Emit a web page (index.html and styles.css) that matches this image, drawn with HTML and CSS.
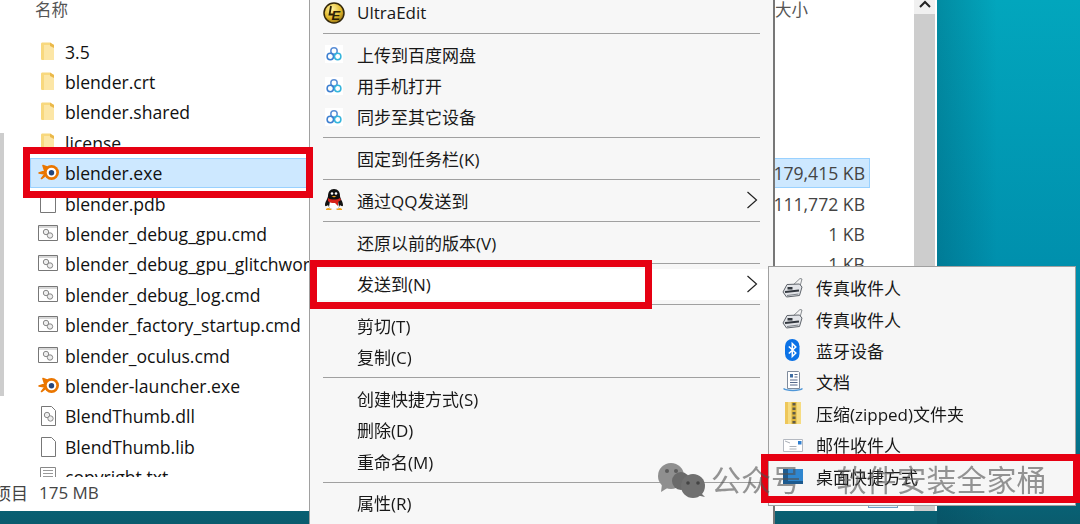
FILE: index.html
```html
<!DOCTYPE html>
<html lang="zh-CN">
  <head>
    <meta charset="UTF-8" />
    <title>blender.exe 发送到桌面快捷方式</title>
    <link rel="stylesheet" href="styles.css">
  </head>
  <body>
    <svg class="defs" width="0" height="0">
      <defs>
        <radialGradient id="ue-gold" cx="40%" cy="30%" r="75%">
          <stop offset="0" stop-color="#fff3a0" />
          <stop offset=".6" stop-color="#e3b92c" />
          <stop offset="1" stop-color="#8f6c10" />
        </radialGradient>
      </defs>
      <symbol id="i-folder" viewBox="0 0 24 24">
        <path d="M6 4c0-1 .5-1.500 1.500-1.500H15l4 2.500v14c0 1-.5 1-1 1H7.500C6.500 20 6 19.500 6 18.500z" fill="#f8d87e" />
        <path d="M9 5h6l4 1v14H9z" fill="#fce6a6" />
        <path d="M15 2.500l4 2.500v3l-4-2z" fill="#eab84a" />
      </symbol>
      <symbol id="i-blender" viewBox="0 0 24 24">
        <path d="M8 4.500 16 7.500c-1 .5-1 .5-1.500 1L4 12l6 1-3.500 4.500 4.500-3.500z" fill="#ea7600" stroke="#ea7600" stroke-width="1.600" stroke-linejoin="round" />
        <circle cx="16.500" cy="11.500" r="7.500" fill="#ea7600" />
        <circle cx="16.500" cy="11.500" r="4.800" fill="#fff" />
        <circle cx="16.500" cy="11.800" r="2.700" fill="#24467c" />
      </symbol>
      <symbol id="i-blank" viewBox="0 0 24 24">
        <path d="M5.500 5.500h15v15h-15z" fill="#fff" stroke="#777" />
      </symbol>
      <symbol id="i-cmd" viewBox="0 0 24 24">
        <path d="M3.500 3.500h19v15h-19z" fill="#fff" stroke="#777" />
        <path d="M4 4h18v2H4z" fill="#d8d8d8" />
        <circle cx="11" cy="10" r="2.700" fill="#eee" stroke="#888" />
        <circle cx="15" cy="13.500" r="2.700" fill="#eee" stroke="#888" />
      </symbol>
      <symbol id="i-dll" viewBox="0 0 24 24">
        <path d="M6.500 2.500h10l4 4v15h-14z" fill="#fff" stroke="#777" />
        <circle cx="12" cy="11" r="2.700" fill="#eee" stroke="#888" />
        <circle cx="15.500" cy="14.500" r="2.700" fill="#eee" stroke="#888" />
      </symbol>
      <symbol id="i-lib" viewBox="0 0 24 24">
        <path d="M6.500 2.500h10l4 4v15h-14z" fill="#fff" stroke="#777" />
      </symbol>
      <symbol id="i-txt" viewBox="0 0 24 24">
        <path d="M5.500 2.500h15v19h-15z" fill="#fff" stroke="#888" />
        <path d="M8 5.500h10M8 8.500h10M8 11.500h10M8 14.500h10" stroke="#999" />
      </symbol>
      <symbol id="i-baidu" viewBox="0 0 22 22">
        <rect x="2" y="2" width="18" height="18" fill="#fff" />
        <circle cx="11" cy="8" r="3.200" fill="none" stroke="#5b8fd6" stroke-width="1.500" />
        <circle cx="7.300" cy="13.500" r="3.200" fill="none" stroke="#3d7fd0" stroke-width="1.500" />
        <circle cx="14.700" cy="13.500" r="3.200" fill="none" stroke="#35b5dc" stroke-width="1.500" />
      </symbol>
      <symbol id="i-fax" viewBox="0 0 22 22">
        <path d="M10 9 18 1.500l2 .5-2.500 9z" fill="#f4f4f4" stroke="#7d8186" stroke-width=".9" />
        <path d="M1 15 5 7.500l12.500-.5 2.500 3-2.500 8.500L4.500 20z" fill="#e2e4e8" stroke="#5f646b" stroke-width="1" />
        <path d="M5.500 10h5v2.500h-5z" fill="#33383f" />
        <path d="M3 15l14-1.500" stroke="#33383f" stroke-width="2" />
        <path d="M5 18.500l11.500-1.500" stroke="#7d8289" />
      </symbol>
      <symbol id="i-bt" viewBox="0 0 22 22">
        <rect x="3" y="0" width="14.500" height="22" rx="7.200" fill="#0b72e6" />
        <path d="M6.800 7.500l7 6.500-3.500 3.500V4.500l3.500 3.500-7 6.500" fill="none" stroke="#fff" stroke-width="1.500" />
      </symbol>
      <symbol id="i-doc" viewBox="0 0 22 22">
        <path d="M1.500 17.500c3 2.500 16 2.500 19 0" fill="none" stroke="#4f97d8" stroke-width="1.500" />
        <path d="M5.500 .5h11l1 1v16h-12z" fill="#fff" stroke="#7f8b9c" />
        <path d="M8 3h3v3.500H8z" fill="#3f6da3" />
        <path d="M12.500 3.500h3M12.500 6h3M8 9h7.500M8 11.500h7.500M8 14h7.500" stroke="#56698a" />
      </symbol>
      <symbol id="i-zip" viewBox="0 0 22 22">
        <path d="M3 0h16v22H3z" fill="#f6dc82" />
        <path d="M3 0h3v22H3z" fill="#eec75a" />
        <path d="M9.500 0h5v22h-5z" fill="#dcb43c" />
        <path d="M10.500 1h3v2.500h-3zM10.500 5.500h3V8h-3zM10.500 10h3v2.500h-3zM10.500 14.500h3V17h-3zM10.500 19h3v2.500h-3z" fill="#5f5b48" />
      </symbol>
      <symbol id="i-mail" viewBox="0 0 22 22">
        <path d="M1.500 5.500h19v12h-19z" fill="#fff" stroke="#b4b9c1" />
        <path d="M16 7h3.500v3.500H16z" fill="#2f7fd0" />
        <path d="M3 7l5 2M7.500 12.500h7M7.500 15h7" stroke="#aab0b8" />
      </symbol>
      <symbol id="i-desktop" viewBox="0 0 22 22">
        <path d="M1 4h20v15H1z" fill="#2f86cf" />
        <path d="M1 4h5v15H1zM1 16h20v3H1z" fill="#1d5a8e" />
      </symbol>
    </svg>

    <section class="explorer">
      <div class="files">
        <div class="list-head">
          <span class="col-name">名称</span>
          <span class="col-size">大小</span>
        </div>
        <ul class="file-list">
          <li class="file"><svg class="file-icon"><use href="#i-folder" /></svg><span class="file-name">3.5</span></li>
          <li class="file"><svg class="file-icon"><use href="#i-folder" /></svg><span class="file-name">blender.crt</span></li>
          <li class="file"><svg class="file-icon"><use href="#i-folder" /></svg><span class="file-name">blender.shared</span></li>
          <li class="file"><svg class="file-icon"><use href="#i-folder" /></svg><span class="file-name">license</span></li>
          <li class="file selected"><svg class="file-icon"><use href="#i-blender" /></svg><span class="file-name">blender.exe</span><span class="file-size">179,415 KB</span></li>
          <li class="file"><svg class="file-icon"><use href="#i-blank" /></svg><span class="file-name">blender.pdb</span><span class="file-size">111,772 KB</span></li>
          <li class="file"><svg class="file-icon"><use href="#i-cmd" /></svg><span class="file-name">blender_debug_gpu.cmd</span><span class="file-size">1 KB</span></li>
          <li class="file"><svg class="file-icon"><use href="#i-cmd" /></svg><span class="file-name">blender_debug_gpu_glitchworkaround.cmd</span><span class="file-size">1 KB</span></li>
          <li class="file"><svg class="file-icon"><use href="#i-cmd" /></svg><span class="file-name">blender_debug_log.cmd</span></li>
          <li class="file"><svg class="file-icon"><use href="#i-cmd" /></svg><span class="file-name">blender_factory_startup.cmd</span></li>
          <li class="file"><svg class="file-icon"><use href="#i-cmd" /></svg><span class="file-name">blender_oculus.cmd</span></li>
          <li class="file"><svg class="file-icon"><use href="#i-blender" /></svg><span class="file-name">blender-launcher.exe</span></li>
          <li class="file"><svg class="file-icon"><use href="#i-dll" /></svg><span class="file-name">BlendThumb.dll</span></li>
          <li class="file"><svg class="file-icon"><use href="#i-lib" /></svg><span class="file-name">BlendThumb.lib</span></li>
          <li class="file"><svg class="file-icon"><use href="#i-txt" /></svg><span class="file-name">copyright.txt</span></li>
        </ul>
        <div class="status">
          <span class="status-count">项目</span>
          <span>175 MB</span>
          <span class="status-view"></span>
        </div>
      </div>
      <div class="vscroll">
        <svg class="vscroll-arrow" width="14" height="8" viewBox="0 0 14 8"><path d="M2 7l5-5 5 5" fill="none" stroke="#222" stroke-width="2" /></svg>
        <div class="vscroll-thumb"></div>
      </div>
    </section>
    <div class="nav-thumb"></div>

    <nav class="menu">
      <div class="item">
        <svg class="item-icon" viewBox="0 0 22 22">
          <circle cx="11" cy="11" r="10" fill="url(#ue-gold)" stroke="#33270a" stroke-width="1.500" />
          <path d="M8 4 6.500 12.500H10" fill="none" stroke="#2a2006" stroke-width="1.800" />
          <text x="8.500" y="17.500" class="ue-mark">E</text>
        </svg>
        <span>UltraEdit</span>
      </div>
      <hr class="sep" />
      <div class="item"><svg class="item-icon"><use href="#i-baidu" /></svg><span>上传到百度网盘</span></div>
      <div class="item"><svg class="item-icon"><use href="#i-baidu" /></svg><span>用手机打开</span></div>
      <div class="item"><svg class="item-icon"><use href="#i-baidu" /></svg><span>同步至其它设备</span></div>
      <hr class="sep" />
      <div class="item"><span class="item-icon"></span><span>固定到任务栏(K)</span></div>
      <hr class="sep" />
      <div class="item">
        <svg class="item-icon" viewBox="0 0 22 22">
          <path d="M11 0c4 0 6 3 6 7 0 2 3 6 3 9 0 2-2 1-3 0-1 3-3 4-6 4s-5-1-6-4c-1 1-3 2-3 0 0-3 3-7 3-9 0-4 2-7 6-7z" fill="#111" />
          <path d="M7 12c2 2 6 2 8 0l1 6c-1 2-3 2-5 2s-4 0-5-2z" fill="#fff" />
          <path d="M5 9c3 2 9 2 12 0l1 2-3 2v4l-3-3c-3 0-5 0-7-2z" fill="#d8231a" />
          <path d="M3 20c2-2 4-1 6 1H3zM13 21c2-2 4-3 6-1v1z" fill="#f2a51c" />
          <circle cx="9" cy="4.500" r="1.300" fill="#fff" />
          <circle cx="13" cy="4.500" r="1.300" fill="#fff" />
          <path d="M8.500 7h5l-2.500 1.600z" fill="#f2a51c" />
        </svg>
        <span>通过QQ发送到</span>
        <svg class="chevron" width="13" height="20" viewBox="0 0 13 20"><path d="M1.500 2l9 8-9 8" fill="none" stroke="#222" stroke-width="1.200" /></svg>
      </div>
      <hr class="sep" />
      <div class="item"><span class="item-icon"></span><span>还原以前的版本(V)</span></div>
      <hr class="sep" />
      <div class="item current">
        <span class="item-icon"></span><span>发送到(N)</span>
        <svg class="chevron" width="13" height="20" viewBox="0 0 13 20"><path d="M1.500 2l9 8-9 8" fill="none" stroke="#222" stroke-width="1.200" /></svg>
      </div>
      <hr class="sep" />
      <div class="item"><span class="item-icon"></span><span>剪切(T)</span></div>
      <div class="item"><span class="item-icon"></span><span>复制(C)</span></div>
      <hr class="sep" />
      <div class="item"><span class="item-icon"></span><span>创建快捷方式(S)</span></div>
      <div class="item"><span class="item-icon"></span><span>删除(D)</span></div>
      <div class="item"><span class="item-icon"></span><span>重命名(M)</span></div>
      <hr class="sep" />
      <div class="item"><span class="item-icon"></span><span>属性(R)</span></div>
    </nav>

    <nav class="submenu">
      <div class="item"><svg class="item-icon"><use href="#i-fax" /></svg><span>传真收件人</span></div>
      <div class="item"><svg class="item-icon"><use href="#i-fax" /></svg><span>传真收件人</span></div>
      <div class="item"><svg class="item-icon"><use href="#i-bt" /></svg><span>蓝牙设备</span></div>
      <div class="item"><svg class="item-icon"><use href="#i-doc" /></svg><span>文档</span></div>
      <div class="item"><svg class="item-icon"><use href="#i-zip" /></svg><span>压缩(zipped)文件夹</span></div>
      <div class="item"><svg class="item-icon"><use href="#i-mail" /></svg><span>邮件收件人</span></div>
      <div class="item"><svg class="item-icon"><use href="#i-desktop" /></svg><span>桌面快捷方式</span></div>
    </nav>

    <div class="mark mark-file"></div>
    <div class="mark mark-send"></div>
    <div class="mark mark-desktop"></div>

    <div class="watermark">
      <svg class="watermark-logo" width="52" height="36" viewBox="0 0 52 36">
        <circle cx="14" cy="14" r="13" fill="#8f8f8f" />
        <path d="M5 22l-1 8 8-5z" fill="#8f8f8f" />
        <circle cx="24" cy="19" r="9" fill="#6a6a6a" />
        <circle cx="36" cy="24" r="12" fill="#707070" />
        <path d="M44 31l4 4-9-2z" fill="#707070" />
        <circle cx="10" cy="9" r="2" fill="#5c5c5c" />
        <circle cx="19" cy="9" r="2" fill="#5c5c5c" />
        <circle cx="31" cy="21" r="1.800" fill="#444" />
        <circle cx="41" cy="21" r="1.800" fill="#444" />
      </svg>
      <span class="watermark-text">公众号 · 软件安装全家桶</span>
    </div>
  </body>
</html>
```

FILE: styles.css
```css
* {
  box-sizing: border-box;
}
html,
body {
  height: 100%;
}
body {
  position: relative;
  margin: 0;
  overflow: hidden;
  font-family: "Open Sans", "Noto Sans CJK SC", sans-serif;
  font-size: 17px;
  color: #181818;
  background:
    linear-gradient(90deg, rgba(0, 60, 80, 0.25) 0, rgba(0, 60, 80, 0) 60px) 937px 0 no-repeat,
    linear-gradient(180deg, #02a6bd 0, #0090ad 50%, #007f9a 75%, #0a5c6e 100%);
  filter: blur(0.5px);
}
.defs {
  position: absolute;
}

/* explorer window */
.explorer {
  position: absolute;
  left: 0;
  top: 0;
  width: 937px;
  height: 511px;
  display: flex;
  background: #fff;
}
.files {
  width: 914px;
  display: flex;
  flex-direction: column;
}
.list-head {
  flex: none;
  height: 36.5px;
  display: flex;
  justify-content: space-between;
  width: 870px;
  padding-left: 35px;
  font-size: 16.5px;
  line-height: 20px;
  color: #555;
}
.col-size {
  width: 95px;
}
.file-list {
  flex: none;
  width: 870px;
  height: 440.5px;
  margin: 0;
  padding: 0;
  list-style: none;
  overflow: hidden;
}
.file {
  height: 30.4px;
  display: flex;
  align-items: center;
  padding-left: 35px;
  font-size: 17.6px;
  white-space: nowrap;
}
.file.selected {
  margin-left: 30px;
  padding-left: 5px;
  background: #cde8ff;
  outline: 1px solid #99d1ff;
  outline-offset: -1px;
}
.file-icon {
  flex: none;
  width: 24px;
  height: 24px;
  margin-right: 6px;
}
.file-name {
  width: 708px;
  flex: none;
  overflow: hidden;
  color: #111;
}
.file-size {
  flex: 1;
  padding-right: 5px;
  text-align: right;
  color: #444;
}
.status {
  flex: 1;
  display: flex;
  align-items: center;
  gap: 11px;
  margin-left: -6px;
  padding-bottom: 4px;
  color: #444;
}
.status-view {
  width: 30px;
  height: 26px;
  margin-left: auto;
  margin-right: 16px;
  margin-bottom: -1px;
  align-self: flex-end;
  border: 1px solid #6f9fc4;
  background: #e5f3ff;
}
.vscroll {
  width: 21px;
  display: flex;
  flex-direction: column;
  align-items: center;
  background: #f0f0f0;
}
.vscroll-arrow {
  flex: none;
  height: 14px;
  padding-bottom: 6px;
}
.vscroll-thumb {
  flex: 1;
  width: 100%;
  background: #cdcdcd;
}
.nav-thumb {
  position: absolute;
  left: 0;
  top: 133px;
  width: 4px;
  height: 263px;
  background: #cdcdcd;
}

/* context menus */
.menu {
  position: absolute;
  left: 309px;
  top: -2px;
  width: 466px;
  height: 530px;
  border-left: 1px solid #a0a0a0;
  border-right: 2px solid #777;
  background: #f7f7f7;
}
.submenu {
  position: absolute;
  left: 768px;
  top: 266px;
  width: 308px;
  height: 240px;
  padding-top: 6px;
  border: 1px solid #a0a0a0;
  background: #f6f6f6;
}
.item {
  height: 31.2px;
  display: flex;
  align-items: center;
  padding-left: 13px;
  padding-bottom: 2px;
  white-space: nowrap;
}
.submenu .item {
  height: 31.4px;
}
.item-icon {
  flex: none;
  width: 22px;
  height: 22px;
  margin-right: 12px;
}
.item.current {
  background: #fff;
}
.chevron {
  margin-left: auto;
  margin-right: 14px;
}
.sep {
  height: 1px;
  margin: 4px 13px 5.6px;
  border: 0;
  background: #a0a0a0;
}
.ue-mark {
  font-family: "Liberation Sans", sans-serif;
  font-size: 13px;
  font-weight: 700;
  font-style: italic;
  fill: #2a2006;
}

/* red guide boxes */
.mark {
  position: absolute;
  border: 7px solid #e60012;
}
.mark-file {
  left: 23px;
  top: 147px;
  width: 290px;
  height: 51px;
}
.mark-send {
  left: 310px;
  top: 260px;
  width: 342px;
  height: 49px;
}
.mark-desktop {
  left: 761px;
  top: 454px;
  width: 319px;
  height: 49px;
}

.watermark {
  position: absolute;
  left: 657px;
  top: 462px;
  display: flex;
  align-items: center;
  gap: 2px;
  font-size: 30px;
  line-height: 36px;
  white-space: nowrap;
  color: rgba(80, 80, 80, 0.6);
}
.watermark-logo {
  flex: none;
}
.watermark-text {
  word-spacing: 6px;
}
```
